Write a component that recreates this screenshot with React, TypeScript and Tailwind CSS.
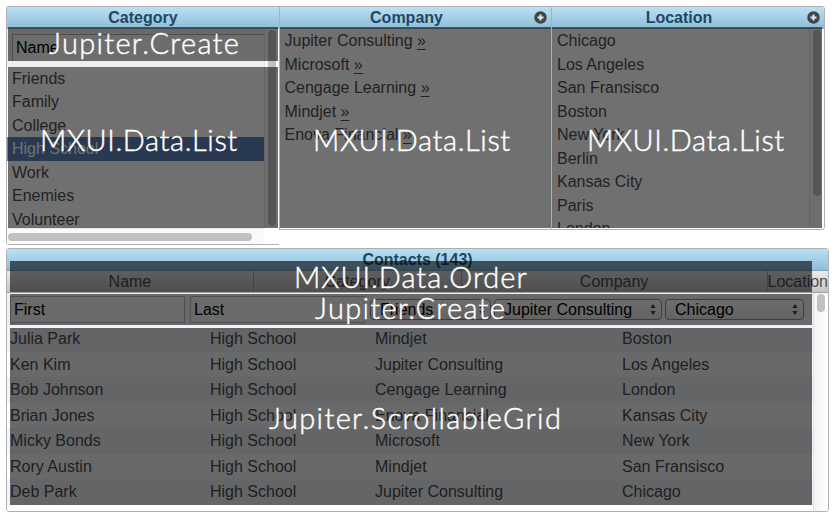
import type { ReactNode } from "react";

const categories = ["Friends", "Family", "College", "High School", "Work", "Enemies", "Volunteer"];
const companies = ["Jupiter Consulting", "Microsoft", "Cengage Learning", "Mindjet", "Enova Financial"];
const locations = ["Chicago", "Los Angeles", "San Fransisco", "Boston", "New York", "Berlin", "Kansas City", "Paris", "London"];
const contacts = [
  ["Julia Park", "High School", "Mindjet", "Boston"],
  ["Ken Kim", "High School", "Jupiter Consulting", "Los Angeles"],
  ["Bob Johnson", "High School", "Cengage Learning", "London"],
  ["Brian Jones", "High School", "Enova Financial", "Kansas City"],
  ["Micky Bonds", "High School", "Microsoft", "New York"],
  ["Rory Austin", "High School", "Mindjet", "San Fransisco"],
  ["Deb Park", "High School", "Jupiter Consulting", "Chicago"],
];

function PlusIcon() {
  return (
    <svg className="absolute right-1 top-1 size-[13px]" viewBox="0 0 13 13">
      <circle cx="6.5" cy="6.5" r="6.2" fill="#444" />
      <path d="M6.5 3.5v6M3.5 6.5h6" stroke="#d4edf9" strokeWidth="2" />
    </svg>
  );
}

function ColumnTitle({ children, add }: { children: ReactNode; add?: boolean }) {
  return (
    <div className={`relative h-[22px] shrink-0 border-b border-[#7ba7c0] bg-linear-to-b from-[#b9e1f6] to-[#90bdd6] text-center font-bold leading-[21px] text-[#1d4860] ${add ? "pr-[18px]" : ""}`}>
      {children}
      {add && <PlusIcon />}
    </div>
  );
}

function Shade({ className, label, labelClass }: { className: string; label: string; labelClass: string }) {
  return (
    <div className={`absolute ${className}`}>
      <span className={`absolute whitespace-nowrap font-[Lato,sans-serif] font-light leading-[36px] text-white [-webkit-text-stroke:0.45px_white] ${labelClass}`}>{label}</span>
    </div>
  );
}

function Select({ children, className }: { children: ReactNode; className: string }) {
  return (
    <div className={`flex h-[21px] items-center justify-between rounded-[4px] border border-[#8c8c8c] bg-linear-to-b from-[#f8f8f8] to-[#e2e2e2] pl-[9px] pr-[5px] text-black ${className}`}>
      <span>{children}</span>
      <svg className="h-[11px] w-[6px]" viewBox="0 0 6 11">
        <path d="M3 0l2.7 4H.3zM3 11l2.7-4H.3z" fill="#444" />
      </svg>
    </div>
  );
}

export default function App() {
  return (
    <div className="relative h-[521px] w-[835px] overflow-hidden bg-white pl-[6px] pt-[6px] font-['Liberation_Sans',Arial,sans-serif] text-[16px] text-[#4e4e4e]">
      <div className="flex h-[242px] items-start">
        <section className="flex h-[239px] w-[273px] flex-col rounded-bl-[3px] rounded-tl-[3px] border-b border-l border-t border-[#b0b0b0]">
          <ColumnTitle>Category</ColumnTitle>
          <div className="flex h-[199px]">
            <div className="w-[257px] overflow-hidden">
              <div className="h-[37.5px] bg-[#eee] pl-[5px] pt-[5px]">
                <div className="h-[27px] border-l border-t border-[#b0b0b0] bg-[#f9f9f9] pl-[3px] leading-[25px] text-black">Name</div>
              </div>
              {categories.map((c) => (
                <div key={c} className={`h-[23.5px] pl-[5px] leading-[23.5px] ${c === "High School" ? "bg-[#5f83b8] text-white" : ""}`}>{c}</div>
              ))}
            </div>
            <div className="w-[15px] border-l border-[#e4e4e4] bg-[#fafafa] pl-[3px] pt-[1px]">
              <div className="h-[196px] w-[8px] rounded-full bg-[#c1c1c1]" />
            </div>
          </div>
          <div className="h-[16px] w-[257px] border-t border-[#e8e8e8] bg-[#fafafa] pl-[1px] pt-[4px]">
            <div className="h-[8px] w-[244px] rounded-full bg-[#c1c1c1]" />
          </div>
        </section>
        <section className="h-[224px] w-[272px] border-b border-l border-t border-[#b0b0b0]">
          <ColumnTitle add>Company</ColumnTitle>
          {companies.map((c) => (
            <div key={c} className="h-[23.5px] pl-[4.5px] leading-[23.5px]">
              {c} <span className="underline underline-offset-[3px]">»</span>
            </div>
          ))}
        </section>
        <section className="flex h-[224px] w-[274px] flex-col overflow-hidden rounded-r-[3px] border border-[#b0b0b0]">
          <ColumnTitle add>Location</ColumnTitle>
          <div className="flex h-[199px]">
            <div className="w-[257px] overflow-hidden">
              {locations.map((l) => (
                <div key={l} className="h-[23.5px] pl-[5px] leading-[23.5px]">{l}</div>
              ))}
            </div>
            <div className="w-[15px] border-l border-[#e4e4e4] bg-[#fafafa] pl-[3px] pt-[1px]">
              <div className="h-[166px] w-[8px] rounded-full bg-[#c1c1c1]" />
            </div>
          </div>
        </section>
      </div>

      <section className="h-[264px] w-[823px] overflow-hidden rounded-[3px] border border-[#b0b0b0]">
        <ColumnTitle>Contacts (143)</ColumnTitle>
        <div className="flex h-[22px] border-b border-[#a0a0a0] bg-linear-to-b from-[#ececec] to-[#c4c4c4] text-center leading-[21px]">
          <div className="w-[247px] border-r border-[#a8a8a8]">Name</div>
          <div className="w-[208px] border-r border-[#a8a8a8]">Category</div>
          <div className="w-[306px] border-r border-[#a8a8a8]">Company</div>
          <div className="whitespace-nowrap">Location</div>
        </div>
        <div className="flex h-[218px]">
          <div className="w-[806px]">
            <div className="flex h-[33px] items-center bg-[#f1edf1] pl-[3px] leading-none text-black">
              <div className="mr-[5px] flex h-[27px] w-[175px] items-center border border-[#b4b4b4] bg-[#f3f3f3] pl-[3px]">First</div>
              <div className="mr-[5px] flex h-[27px] w-[175px] items-center border border-[#b4b4b4] bg-[#f3f3f3] pl-[3px]">Last</div>
              <Select className="mr-[3px] w-[121px]">Friends</Select>
              <Select className="mr-[3px] w-[168px]">Jupiter Consulting</Select>
              <Select className="w-[139px]">Chicago</Select>
            </div>
            {contacts.map((row) => (
              <div key={row[0]} className="grid h-[25.5px] grid-cols-[200px_165px_247px_1fr] pl-[3px] leading-[25px] odd:bg-white even:bg-[#f1f5fa]">
                {row.map((cell) => (
                  <span key={cell}>{cell}</span>
                ))}
              </div>
            ))}
          </div>
          <div className="w-[15px] border-l border-[#e0e0e0] bg-linear-to-r from-[#f3f3f3] to-white pl-[3px] pt-[1px]">
            <div className="h-[18px] w-[8px] rounded-full bg-[#c1c1c1]" />
          </div>
        </div>
      </section>

      <Shade className="left-[8px] top-[27px] h-[34px] w-[270px] bg-black/56" label="Jupiter.Create" labelClass="left-[41px] top-[-2px] text-[29px] tracking-[1.3px]" />
      <Shade className="left-[8px] top-[67px] h-[161px] w-[270px] bg-black/56" label="MXUI.Data.List" labelClass="left-[32px] top-[55px] text-[29px] tracking-[0.6px]" />
      <Shade className="left-[280px] top-[27px] h-[201px] w-[271px] bg-black/56" label="MXUI.Data.List" labelClass="left-[33px] top-[95px] text-[29px] tracking-[0.6px]" />
      <Shade className="left-[552px] top-[27px] h-[201px] w-[270px] bg-black/56" label="MXUI.Data.List" labelClass="left-[35px] top-[95px] text-[29px] tracking-[0.6px]" />
      <Shade className="left-[10px] top-[261px] h-[31px] w-[802px] bg-black/60" label="MXUI.Data.Order" labelClass="left-[284px] top-[-2px] text-[29px] tracking-[1px]" />
      <Shade className="left-[10px] top-[294px] h-[31px] w-[802px] bg-black/56" label="Jupiter.Create" labelClass="left-[305px] top-[-4px] text-[29px] tracking-[1.3px]" />
      <Shade className="left-[10px] top-[328px] h-[177px] w-[802px] bg-black/59" label="Jupiter.ScrollableGrid" labelClass="left-[259px] top-[72px] text-[29px] tracking-[1.35px]" />
    </div>
  );
}
